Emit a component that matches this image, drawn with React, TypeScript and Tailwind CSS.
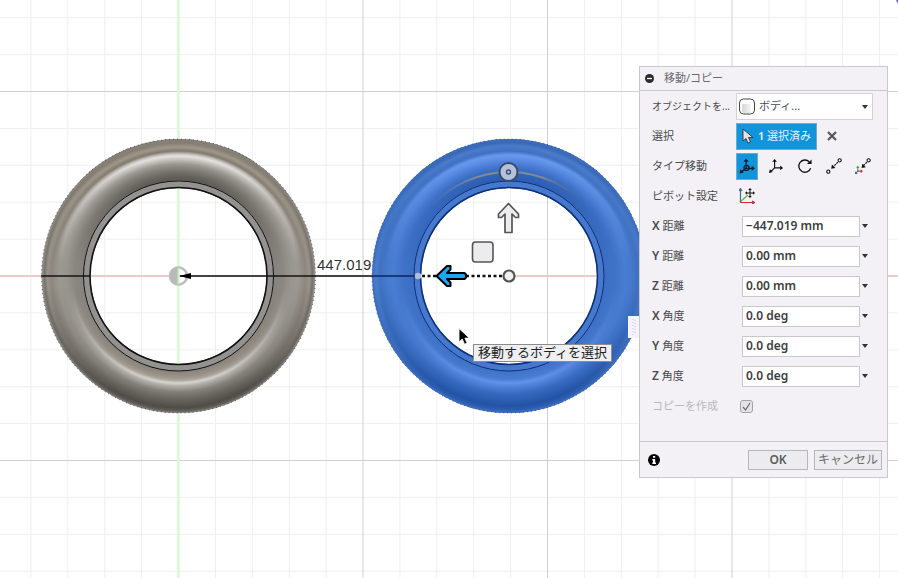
import type { ReactNode } from "react";
import clsx from "clsx";

const STEP = 36.9;
const ORIGIN = { x: 178.5, y: 276 };
const gridLines = Array.from({ length: 80 }, (_, i) => i - 10);

type Shade = [radius: number, color: string][];

const steel = {
  side: [
    [88, "#8d8a86"], [94, "#8f8c88"], [95, "#86827d"], [104, "#8b8680"], [112, "#98948e"],
    [119, "#9c9893"], [127, "#8d877e"], [131, "#97928b"], [134, "#76726c"], [137, "#a19e99"],
  ] as Shade,
  top: [
    [95, "#4f4b47"], [99, "#5b5752"], [106, "#7b7771"], [112, "#9b9792"], [117, "#c9c6c2"],
    [120, "#e4e2df"], [122, "#c9c5bf"], [125, "#81796f"], [129, "#9f9788"], [133, "#857e72"], [137, "#85817c"],
  ] as Shade,
  bottom: [
    [95, "#8a8279"], [101, "#9d9588"], [104, "#aca69d"], [107, "#dedbd9"], [110, "#b4b0ab"],
    [116, "#827e78"], [123, "#69655f"], [132, "#4f4b46"], [135, "#625e59"], [137, "#8f8c88"],
  ] as Shade,
  band: "#949290",
  line: "#111111",
};

const blue = {
  side: [
    [88, "#4a7dd1"], [95, "#3c6fc3"], [106, "#3f73c8"], [116, "#4a7ed3"], [122, "#467acd"],
    [129, "#3f71c2"], [133, "#4a7ccd"], [137, "#3a6bba"],
  ] as Shade,
  top: [
    [95, "#2757ab"], [103, "#3062b8"], [110, "#4476cc"], [117, "#5c8ee6"], [121, "#6899ee"],
    [125, "#3f70c2"], [130, "#4b7ccb"], [134, "#3867b6"], [137, "#3f70bd"],
  ] as Shade,
  bottom: [
    [95, "#4073c7"], [103, "#4a7ed2"], [107, "#6496ec"], [111, "#5082d8"],
    [118, "#366abf"], [130, "#2353a5"], [134, "#2c5daf"], [137, "#4474c4"],
  ] as Shade,
  band: "#4678cc",
  line: "#0d2f7c",
};

function Shading({ id, shade }: { id: string; shade: Shade }) {
  return (
    <radialGradient id={id} gradientUnits="userSpaceOnUse" cx="0" cy="0" r="137">
      {shade.map(([radius, color]) => (
        <stop key={radius} offset={radius / 137} stopColor={color} />
      ))}
    </radialGradient>
  );
}

function FadeStops() {
  return (
    <>
      <stop offset="0" stopColor="#fff" />
      <stop offset="0.09" stopColor="#fff" />
      <stop offset="0.16" stopColor="#ccc" />
      <stop offset="0.24" stopColor="#888" />
      <stop offset="0.46" stopColor="#000" />
    </>
  );
}

function Ring({ id, x, palette }: { id: string; x: number; palette: typeof steel }) {
  return (
    <g transform={`translate(${x} ${ORIGIN.y})`}>
      <defs>
        <Shading id={`${id}-side`} shade={palette.side} />
        <Shading id={`${id}-top`} shade={palette.top} />
        <Shading id={`${id}-bottom`} shade={palette.bottom} />
        <linearGradient id={`${id}-fade`} x1="0" y1="0" x2="0" y2="1">
          <FadeStops />
        </linearGradient>
        <linearGradient id={`${id}-rise`} x1="0" y1="1" x2="0" y2="0">
          <FadeStops />
        </linearGradient>
        <mask id={`${id}-upper`} maskUnits="userSpaceOnUse" x="-140" y="-140" width="280" height="280">
          <rect x="-140" y="-140" width="280" height="280" fill={`url(#${id}-fade)`} />
        </mask>
        <mask id={`${id}-lower`} maskUnits="userSpaceOnUse" x="-140" y="-140" width="280" height="280">
          <rect x="-140" y="-140" width="280" height="280" fill={`url(#${id}-rise)`} />
        </mask>
      </defs>
      <g fill="none" strokeWidth="49">
        <circle r="112.5" stroke={`url(#${id}-side)`} />
        <g mask={`url(#${id}-upper)`}>
          <circle r="112.5" stroke={`url(#${id}-top)`} />
        </g>
        <g mask={`url(#${id}-lower)`}>
          <circle r="112.5" stroke={`url(#${id}-bottom)`} />
        </g>
      </g>
      <g fill="none">
        <circle r="92" stroke={palette.band} strokeWidth="7" />
        <circle r="95" stroke={palette.line} strokeWidth="1" />
        <circle r="88.5" stroke={palette.line} strokeWidth="1.6" />
        <circle r="137" stroke={palette.line} strokeWidth="1" strokeDasharray="1 3" opacity="0.6" />
      </g>
    </g>
  );
}

function Grid() {
  return (
    <g>
      {gridLines.filter((i) => i % 5 !== 0).map((i) => (
        <g key={i} stroke="#efefef">
          <line x1={ORIGIN.x + i * STEP} x2={ORIGIN.x + i * STEP} y1="0" y2="100%" />
          <line y1={ORIGIN.y + i * STEP} y2={ORIGIN.y + i * STEP} x1="0" x2="100%" />
        </g>
      ))}
      {gridLines.filter((i) => i % 5 === 0).map((i) => (
        <g key={i} stroke="#d0d0d0">
          <line x1={ORIGIN.x + i * STEP} x2={ORIGIN.x + i * STEP} y1="0" y2="100%" />
          <line y1={ORIGIN.y + i * STEP} y2={ORIGIN.y + i * STEP} x1="0" x2="100%" />
        </g>
      ))}
      <line x1="178.5" x2="178.5" y1="0" y2="100%" stroke="#d0fbce" strokeWidth="2.2" />
      <line x1="0" x2="100%" y1="276" y2="276" stroke="#f7a9ac" strokeWidth="1.2" />
    </g>
  );
}

function Viewport() {
  return (
    <svg className="absolute inset-0 h-full w-full" aria-hidden="true">
      <Grid />
      <Ring id="steel" x={178.5} palette={steel} />
      <Ring id="blue" x={509} palette={blue} />
      <path d="M898 0h-2l2 4z" fill="#5b62d8" />

      {/* origin marker */}
      <g transform="translate(178.5 276)">
        <circle r="8.5" fill="#fff" fillOpacity="0.7" stroke="#bcbcbc" strokeWidth="2.5" />
        <path d="M0 0V-8A8 8 0 0 0 -8 0zM0 0V8A8 8 0 0 1 -8 0z" fill="#b9b9b9" />
        <path d="M0-8V8" stroke="#c4f2c2" strokeWidth="2" />
      </g>

      {/* distance dimension */}
      <path d="M41 276h49M180 276h192" stroke="#151515" strokeWidth="1.3" />
      <path d="M372 276h45" stroke="#0b2560" strokeWidth="1.3" />
      <path d="M179 276l12-3v6z" fill="#000" />
      <text x="317" y="270" fontSize="15" fill="#333" className="font-['Liberation_Sans',sans-serif]">
        447.019
      </text>

      {/* rotation handle */}
      <defs>
        <linearGradient id="arc" gradientUnits="userSpaceOnUse" x1="430" x2="588" y1="0" y2="0">
          <stop offset="0" stopColor="#6d7f9d" stopOpacity="0" />
          <stop offset="0.3" stopColor="#7f8a99" />
          <stop offset="0.7" stopColor="#7f8a99" />
          <stop offset="1" stopColor="#4d5f7d" stopOpacity="0" />
        </linearGradient>
      </defs>
      <path d="M432 206A104 104 0 0 1 586 206" fill="none" stroke="url(#arc)" strokeWidth="2" />
      <circle cx="508.5" cy="172" r="9" fill="#b3c2dc" stroke="#3d4a66" strokeWidth="2" />
      <circle cx="508.5" cy="172" r="2" fill="none" stroke="#3d4a66" strokeWidth="1.3" />

      {/* translation handles */}
      <path
        d="M508.5 203.5L518.5 214v3.5h-3l-3.5-3.5v18.5h-7v-18.5l-3.5 3.5h-3v-3.5z"
        fill="#ececee"
        stroke="#555"
        strokeWidth="1.7"
        strokeLinejoin="round"
      />
      <rect x="472.5" y="242" width="20.5" height="20" rx="3" fill="#ececee" stroke="#555" strokeWidth="1.6" />
      <path d="M419 276h86" stroke="#fff" strokeWidth="3" />
      <path d="M422 276h80" stroke="#111" strokeWidth="2.6" strokeDasharray="3 2.5" />
      <circle cx="418" cy="276" r="3.2" fill="#aebdd8" />
      <path
        d="M436.500 276L447 266h3.5v3.5l-3.5 3.5h17.5l1.5 1.5v3l-1.5 1.5h-17.5l3.5 3.5v3.5h-3.5z"
        fill="#1ba7f0"
        stroke="#000"
        strokeWidth="2"
        strokeLinejoin="round"
      />
      <circle cx="509" cy="276" r="5.5" fill="#f1f1f1" stroke="#555" strokeWidth="2.2" />

      {/* pointer */}
      <path d="M459 328.5v13.5l3.3-3 2.2 5.2 2.6-1.1-2.2-5h4.4z" fill="#000" stroke="#fff" strokeWidth="0.8" />
    </svg>
  );
}

function Caret({ className }: { className?: string }) {
  return (
    <svg className={clsx("h-1 w-1.5", className)} viewBox="0 0 6 4" aria-hidden="true">
      <path d="M0 0h6L3 4z" fill="#333" />
    </svg>
  );
}

const moveTypes = [
  {
    name: "自由移動",
    icon: (
      <>
        <path d="M7.5 11V3M7.500 11h7M7.500 11l-5 4" stroke="#091f30" strokeWidth="1.4" />
        <path d="M7.500 0.500l2.800 3.500h-5.600zM17 11l-3.500-2.800v5.600zM0.500 16.500l1-4.500 3.500 3.500z" fill="#091f30" />
        <circle cx="8" cy="10.500" r="2.700" stroke="#091f30" strokeWidth="1.3" />
      </>
    ),
  },
  {
    name: "移動",
    icon: (
      <>
        <path d="M7 10.5V3M7 10.5h7M7 10.5l-4 4" stroke="#111" strokeWidth="1.2" />
        <path d="M7 1l2.500 3h-5zM16 10.5l-3-2.500v5zM1 16l1-4 3 3z" fill="#111" />
      </>
    ),
  },
  {
    name: "回転",
    icon: (
      <>
        <path d="M13 4A6.500 6.500 0 1 0 14.500 11" stroke="#111" strokeWidth="1.4" />
        <path d="M15.500 1.500v5h-5z" fill="#111" />
      </>
    ),
  },
  {
    name: "点から点",
    icon: (
      <>
        <circle cx="2.5" cy="14.5" r="1.7" fill="#fff" stroke="#111" strokeWidth="1.2" />
        <circle cx="14.5" cy="2.5" r="1.7" fill="#fff" stroke="#111" strokeWidth="1.2" />
        <path d="M12.5 4.5L8 9" stroke="#111" strokeWidth="1.3" strokeDasharray="2 1" />
        <path d="M5.500 11.5l.8-4.500 3.700 3.700z" fill="#111" />
      </>
    ),
  },
  {
    name: "点から位置",
    icon: (
      <>
        <circle cx="14.5" cy="2.5" r="1.7" fill="#fff" stroke="#111" strokeWidth="1.2" />
        <path d="M12.5 4.5L9 8" stroke="#111" strokeWidth="1.3" strokeDasharray="2 1" />
        <path d="M7 10.5l.8-4.500 3.700 3.700z" fill="#111" />
        <path d="M3 14V10" stroke="#3aa648" strokeWidth="1.2" />
        <path d="M3 8l1.800 2.500H1.200z" fill="#3aa648" />
        <path d="M3 14h4" stroke="#c2303c" strokeWidth="1.2" />
        <path d="M6 12l2.500 2L6 16z" fill="#c2303c" />
        <path d="M3 14l-2 2" stroke="#2f6fb0" strokeWidth="1.2" />
        <path d="M0 14v3h3z" fill="#2f6fb0" />
      </>
    ),
  },
];

const fields = [
  { id: "x-distance", axis: "X", label: "距離", value: "−447.019 mm" },
  { id: "y-distance", axis: "Y", label: "距離", value: "0.00 mm" },
  { id: "z-distance", axis: "Z", label: "距離", value: "0.00 mm" },
  { id: "x-angle", axis: "X", label: "角度", value: "0.0 deg" },
  { id: "y-angle", axis: "Y", label: "角度", value: "0.0 deg" },
  { id: "z-angle", axis: "Z", label: "角度", value: "0.0 deg" },
];

function Row({ children }: { children: ReactNode }) {
  return <div className="grid h-[30px] grid-cols-[84px_1fr] items-center">{children}</div>;
}

function MovePanel() {
  return (
    <form
      className="relative mt-[66px] mr-2.5 w-[249px] border border-[#c9c8cb] bg-[#f3f1f5] text-[11px] text-[#4a4a4c]"
      onSubmit={(e) => e.preventDefault()}
    >
      {/* resize grip */}
      <div className="absolute top-[249px] -left-3 flex h-[22px] w-[11px] items-center justify-center bg-[#f5f3f7]">
        <svg className="h-4 w-1" viewBox="0 0 4 16" aria-hidden="true">
          <path d="M1 0v16M3 1v15" stroke="#c6c9d8" strokeDasharray="1 2" />
        </svg>
      </div>

      <header className="flex h-6 items-center gap-2.5 border-b border-[#c9c8cb] px-[5px]">
        <button type="button" aria-label="折りたたむ" className="size-[9px]">
          <svg className="size-full" viewBox="0 0 9 9">
            <circle cx="4.5" cy="4.5" r="4.5" fill="#2b2b2b" />
            <path d="M2 4.5h5" stroke="#fff" strokeWidth="1.3" />
          </svg>
        </button>
        <h2 className="text-[#6a6a6c]">移動/コピー</h2>
      </header>

      <div className="px-3 pb-5">
        <Row>
          <label htmlFor="target" className="text-[10px] whitespace-nowrap">オブジェクトを...</label>
          <div className="relative w-[137px]">
            <select
              id="target"
              className="h-[27px] w-full appearance-none border border-[#d3d2d5] bg-white pl-[22px] text-[11px] text-[#4a4a4c]"
            >
              <option>ボディ...</option>
            </select>
            <svg className="pointer-events-none absolute top-[5px] left-[3px] h-[17px] w-4" viewBox="0 0 16 17" aria-hidden="true">
              <defs>
                <linearGradient id="body-icon">
                  <stop offset="0" stopColor="#d4d4da" />
                  <stop offset="1" stopColor="#f7f7f8" />
                </linearGradient>
              </defs>
              <rect x="0.5" y="1" width="15" height="15" rx="4" fill="#fff" stroke="#444" />
              <path d="M3 6h9v9H5a2 2 0 0 1-2-2z" fill="url(#body-icon)" />
            </svg>
            <Caret className="pointer-events-none absolute top-3 right-[5px]" />
          </div>
        </Row>

        <Row>
          <span>選択</span>
          <div className="flex items-center gap-2.5">
            <button
              type="button"
              className="flex h-[27px] w-[81px] items-center justify-center gap-1 border border-[#6fa9cc] bg-[#1094dc] text-[#e6f5ff]"
            >
              <svg className="h-4 w-3" viewBox="0 0 12 16" aria-hidden="true">
                <path d="M1 1v12l3-2.5L6 15l2.500-1L6.500 9.500H11z" fill="#e2e2e2" stroke="#333" strokeWidth="0.9" />
              </svg>
              <span><b className="font-semibold">1</b> 選択済み</span>
            </button>
            <button type="button" aria-label="選択を解除" className="size-[10px]">
              <svg className="size-full" viewBox="0 0 10 10">
                <path d="M1 1l8 8M9 1L1 9" stroke="#555" strokeWidth="2.2" />
              </svg>
            </button>
          </div>
        </Row>

        <Row>
          <span>タイプ移動</span>
          <div className="flex gap-[7px]">
            {moveTypes.map((type, i) => (
              <button
                key={type.name}
                type="button"
                aria-label={type.name}
                aria-pressed={i === 0}
                className={clsx(
                  "flex h-[27px] w-[22px] items-center justify-center",
                  i === 0 && "border border-[#6fa9cc] bg-[#1094dc]"
                )}
              >
                <svg className="size-4 shrink-0" viewBox="0 0 17 17" fill="none">{type.icon}</svg>
              </button>
            ))}
          </div>
        </Row>

        <Row>
          <span>ピボット設定</span>
          <button type="button" aria-label="ピボット設定" className="ml-[3px] size-4">
            <svg className="size-full" viewBox="0 0 16 16" fill="none">
              <path d="M1 14L9 7" stroke="#62b846" strokeWidth="1.3" />
              <path d="M1.5 14V1M0 3l1.500-2.500L3 3" stroke="#3c6f93" strokeWidth="1.2" />
              <path d="M1 14.5h14M13 13l2.500 1.500L13 16" stroke="#c2303c" strokeWidth="1.2" />
              <path d="M11 1v8M7 5h8" stroke="#111" />
              <path d="M11 0l1.800 2H9.200zM11 10l1.800-2H9.200zM6 5l2-1.800v3.600zM16 5l-2-1.800v3.600z" fill="#111" />
            </svg>
          </button>
        </Row>

        {fields.map((field) => (
          <Row key={field.id}>
            <label htmlFor={field.id}>
              <b className="text-xs font-semibold">{field.axis}</b> {field.label}
            </label>
            <div className="flex items-center pl-1.5">
              <input
                id={field.id}
                defaultValue={field.value}
                className="h-[21px] w-[118px] border border-[#c9c8cb] bg-white px-[3px] pb-px text-xs font-semibold text-[#404042]"
              />
              <button type="button" aria-label={`${field.axis} ${field.label}の履歴`} className="px-0.5 py-1">
                <Caret />
              </button>
            </div>
          </Row>
        ))}

        <Row>
          <label htmlFor="copy" className="text-[#b9b8bb]">コピーを作成</label>
          <div className="relative ml-1 size-[13px]">
            <input
              id="copy"
              type="checkbox"
              defaultChecked
              disabled
              className="block size-full appearance-none rounded-[3px] border border-[#a3a3a5] bg-[#e4e3e6]"
            />
            <svg className="pointer-events-none absolute inset-0" viewBox="0 0 13 13" fill="none" aria-hidden="true">
              <path d="M3 7l2.500 3L10 3" stroke="#6e6e70" strokeWidth="1.3" />
            </svg>
          </div>
        </Row>
      </div>

      <footer className="flex h-9 items-center gap-[6px] border-t border-[#c9c8cb] pr-[5px] pl-2">
        <button type="button" aria-label="情報" className="mr-auto size-3">
          <svg className="size-full" viewBox="0 0 12 12">
            <circle cx="6" cy="6" r="6" fill="#000" />
            <path d="M5 2h2.200v1.800H5zM4.300 5h2.900v3.500h.8V10H4.300V8.500H5v-2h-.7z" fill="#fff" />
          </svg>
        </button>
        <button type="submit" className="h-5 w-[60px] border border-[#b7b6b9] bg-[#ecebee] text-xs leading-4 font-semibold text-[#5c5c5e]">
          OK
        </button>
        <button type="button" className="h-5 w-[68px] border border-[#b7b6b9] bg-[#ecebee] text-xs leading-4 text-[#6c6c6e]">
          キャンセル
        </button>
      </footer>
    </form>
  );
}

export default function App() {
  return (
    <main className="relative flex min-h-screen items-start justify-end overflow-hidden bg-white font-['Noto_Sans','Noto_Sans_CJK_JP',sans-serif]">
      <Viewport />
      <div
        role="tooltip"
        className="absolute top-[344px] left-[473px] flex h-[18px] items-center border border-[#8c8c8c] bg-[#efeef0] px-1 text-[13px] whitespace-nowrap text-[#222]"
      >
        移動するボディを選択
      </div>
      <MovePanel />
    </main>
  );
}
